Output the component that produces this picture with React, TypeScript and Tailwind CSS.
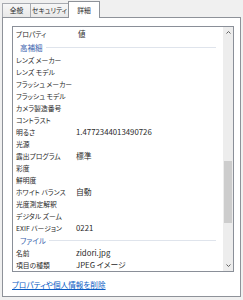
type Row = { name: string; value?: string }

const photoRows: Row[] = [
  { name: 'レンズ メーカー' },
  { name: 'レンズ モデル' },
  { name: 'フラッシュ メーカー' },
  { name: 'フラッシュ モデル' },
  { name: 'カメラ製造番号' },
  { name: 'コントラスト' },
  { name: '明るさ', value: '1.4772344013490726' },
  { name: '光源' },
  { name: '露出プログラム', value: '標準' },
  { name: '彩度' },
  { name: '鮮明度' },
  { name: 'ホワイト バランス', value: '自動' },
  { name: '光度測定解釈' },
  { name: 'デジタル ズーム' },
  { name: 'EXIF バージョン', value: '0221' },
]

const fileRows: Row[] = [
  { name: '名前', value: 'zidori.jpg' },
  { name: '項目の種類', value: 'JPEG イメージ' },
]

function PropRow({ name, value }: Row) {
  return (
    <div className="flex h-[12px] shrink-0 items-center">
      <span className="w-[63px] shrink-0 whitespace-nowrap pl-[3px] text-[6.8px]">{name}</span>
      <span className="whitespace-nowrap text-[7.8px]">{value}</span>
    </div>
  )
}

function GroupRow({ label }: { label: string }) {
  return (
    <div className="flex h-[13px] shrink-0 items-center pl-[7px] pr-[7px]">
      <span className="whitespace-nowrap text-[7.5px] text-[#3a5fae]">{label}</span>
      <div className="ml-[3px] h-px flex-1 bg-[#dfe4ec]" />
    </div>
  )
}

function Chevron({ up }: { up?: boolean }) {
  return (
    <svg width="5" height="3" viewBox="0 0 5 3" className="text-[#606060]">
      <path d={up ? 'M0.5 2.5 L2.5 0.5 L4.5 2.5' : 'M0.5 0.5 L2.5 2.5 L4.5 0.5'} fill="none" stroke="currentColor" strokeWidth="1" />
    </svg>
  )
}

function Tab({ label, width, active }: { label: string; width: string; active?: boolean }) {
  return (
    <div
      className={
        active
          ? `relative z-10 -mb-px flex h-[17px] items-center justify-center whitespace-nowrap border border-b-0 border-[#8e9299] bg-white ${width}`
          : `flex h-[14px] items-center justify-center whitespace-nowrap border border-b-0 border-[#a7aab0] bg-gradient-to-b from-[#f7f7f7] to-[#e8e8e8] ${width}`
      }
    >
      {label}
    </div>
  )
}

export default function App() {
  return (
    <div
      className="flex h-[300px] w-[243px] flex-col bg-[#f0f0f0] px-[2px] pt-[1px] pb-[3px] text-[6.8px] leading-none text-[#2a2a2a] [font-feature-settings:'palt']"
      style={{ fontFamily: '"Noto Sans CJK JP", "Noto Sans", sans-serif' }}
    >
      <div className="flex items-end">
        <Tab label="全般" width="w-[29px]" />
        <div className="-ml-px">
          <Tab label="セキュリティ" width="w-[39px]" />
        </div>
        <div className="-ml-px">
          <Tab label="詳細" width="w-[32px]" active />
        </div>
      </div>
      <div className="flex flex-1 flex-col border border-[#8e9299] bg-white pt-[8px] pr-[6px] pl-[9px]">
        <div className="flex h-[246px] border border-[#8a8f98]">
          <div className="flex flex-1 flex-col overflow-hidden">
            <div className="flex h-[14px] shrink-0 items-center">
              <span className="w-[63px] shrink-0 pl-[3px]">プロパティ</span>
              <span className="pl-[2px] text-[7.5px]">値</span>
            </div>
            <GroupRow label="高補細" />
            {photoRows.map((r) => (
              <PropRow key={r.name} {...r} />
            ))}
            <GroupRow label="ファイル" />
            {fileRows.map((r) => (
              <PropRow key={r.name} {...r} />
            ))}
          </div>
          <div className="flex w-[10px] shrink-0 flex-col bg-[#ededed]">
            <div className="flex h-[11px] items-center justify-center">
              <Chevron up />
            </div>
            <div className="h-[123px]" />
            <div className="mx-[1px] h-[62px] bg-[#cdcdcd]" />
            <div className="flex-1" />
            <div className="flex h-[11px] items-center justify-center">
              <Chevron />
            </div>
          </div>
        </div>
        <div className="mt-[9px] text-[7.6px] text-[#0a5bc4] underline">プロパティや個人情報を削除</div>
      </div>
    </div>
  )
}
